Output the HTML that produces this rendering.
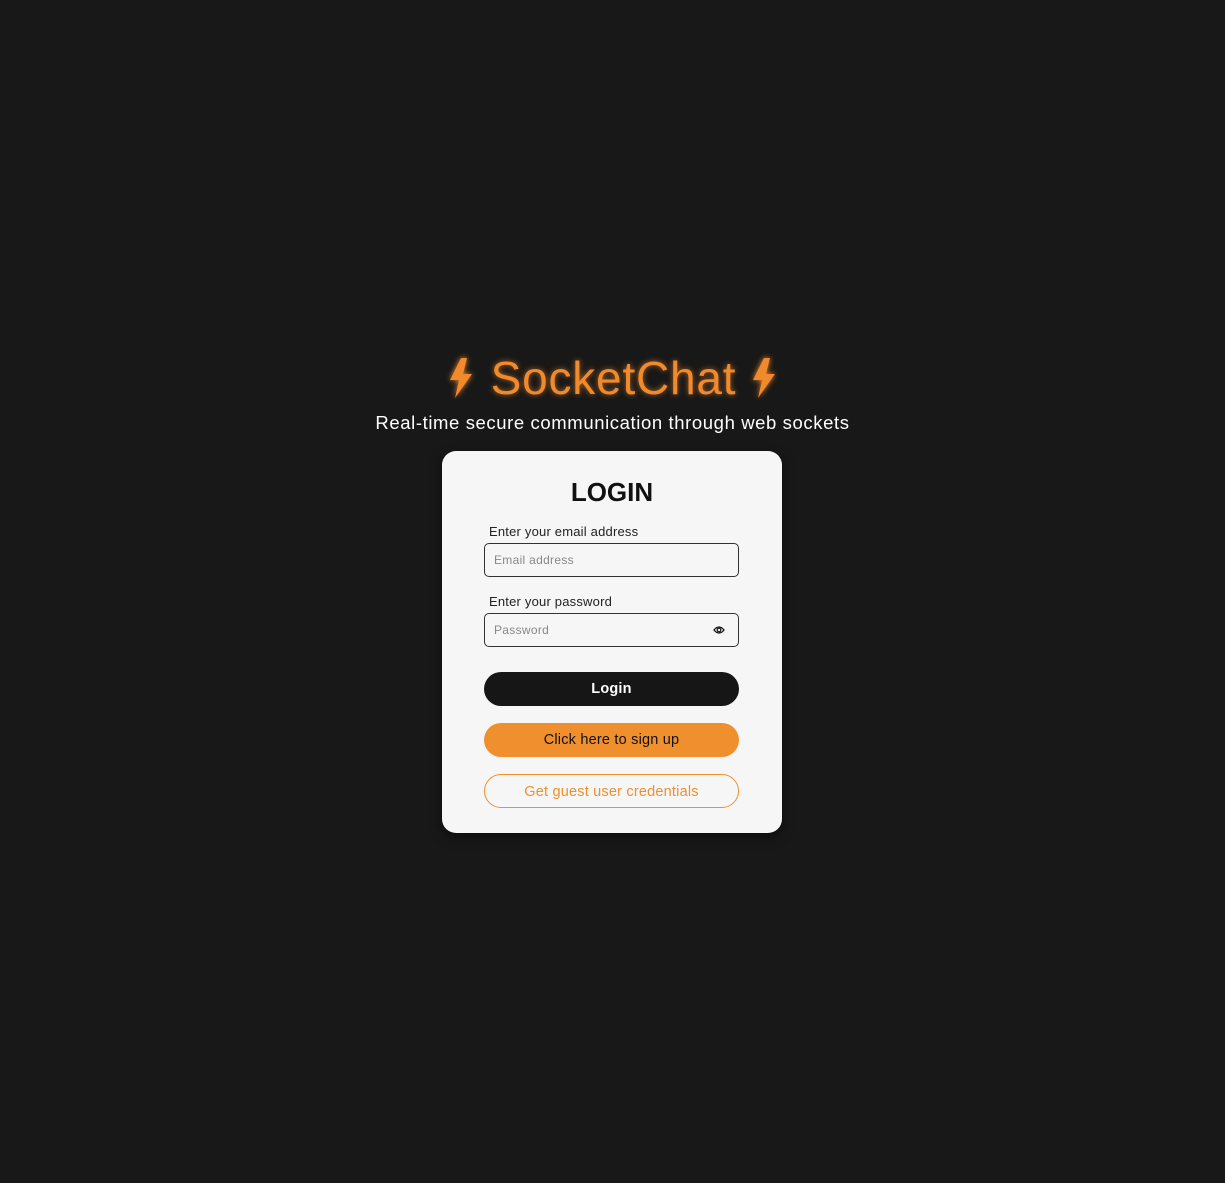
<!DOCTYPE html>
<html><head><style>
body{margin:0;width:1225px;height:1183px;background:#181818;font-family:"Liberation Sans",sans-serif;position:relative;overflow:hidden}
.abs{position:absolute}
.title{left:0;width:1225px;top:352px;text-align:center;color:#f08a2c;font-size:46px;letter-spacing:0.8px;line-height:52px;text-shadow:0 0 6px rgba(240,138,44,.7)}
.sub{left:0;width:1225px;top:412px;text-align:center;color:#fff;font-size:18.5px;letter-spacing:0.6px}
.card{left:442px;top:451px;width:340px;height:382px;background:#f6f6f6;border-radius:14px;box-shadow:0 4px 12px rgba(0,0,0,.5)}
.h{left:0;width:340px;top:26px;text-align:center;font-size:26px;font-weight:bold;color:#111}
.lbl{left:47px;font-size:13px;color:#222;letter-spacing:0.2px}
.inp{left:42px;width:253px;height:32px;border:1px solid #333;border-radius:5px;box-sizing:content-box}
.ph{left:9px;top:9px;font-size:12px;color:#888;letter-spacing:0.3px}
.btn{left:42px;width:255px;height:34px;border-radius:17px;text-align:center;line-height:34px;font-size:14.5px;box-sizing:border-box;letter-spacing:0.2px}
</style></head><body>
<div class="abs title"><svg width="28" height="44" viewBox="0 0 28 44" style="vertical-align:-6px;margin-right:16px;filter:drop-shadow(0 0 3px #f08a2c)"><path d="M14 2 L3 24 H12 L8 42 L25 18 H16 L20 2Z" fill="#f08a2c"/></svg>SocketChat<svg width="28" height="44" viewBox="0 0 28 44" style="vertical-align:-6px;margin-left:14px;filter:drop-shadow(0 0 3px #f08a2c)"><path d="M14 2 L3 24 H12 L8 42 L25 18 H16 L20 2Z" fill="#f08a2c"/></svg></div>
<div class="abs sub">Real-time secure communication through web sockets</div>
<div class="abs card">
<div class="abs h">LOGIN</div>
<div class="abs lbl" style="top:73px">Enter your email address</div>
<div class="abs inp" style="top:92px"><div class="abs ph">Email address</div></div>
<div class="abs lbl" style="top:143px">Enter your password</div>
<div class="abs inp" style="top:162px"><div class="abs ph">Password</div>
<svg class="abs" style="left:228px;top:11px" width="12" height="10" viewBox="0 0 12 10"><path d="M1 5 Q6 -1 11 5 Q6 11 1 5Z" fill="none" stroke="#111" stroke-width="1.3"/><circle cx="6" cy="5" r="1.8" fill="none" stroke="#111" stroke-width="1.2"/></svg></div>
<div class="abs btn" style="top:221px;background:#161616;color:#fff;font-weight:bold">Login</div>
<div class="abs btn" style="top:272px;background:#f08f2e;color:#111">Click here to sign up</div>
<div class="abs btn" style="top:323px;border:1px solid #f08f2e;color:#f08f2e">Get guest user credentials</div>
</div>
</body></html>
